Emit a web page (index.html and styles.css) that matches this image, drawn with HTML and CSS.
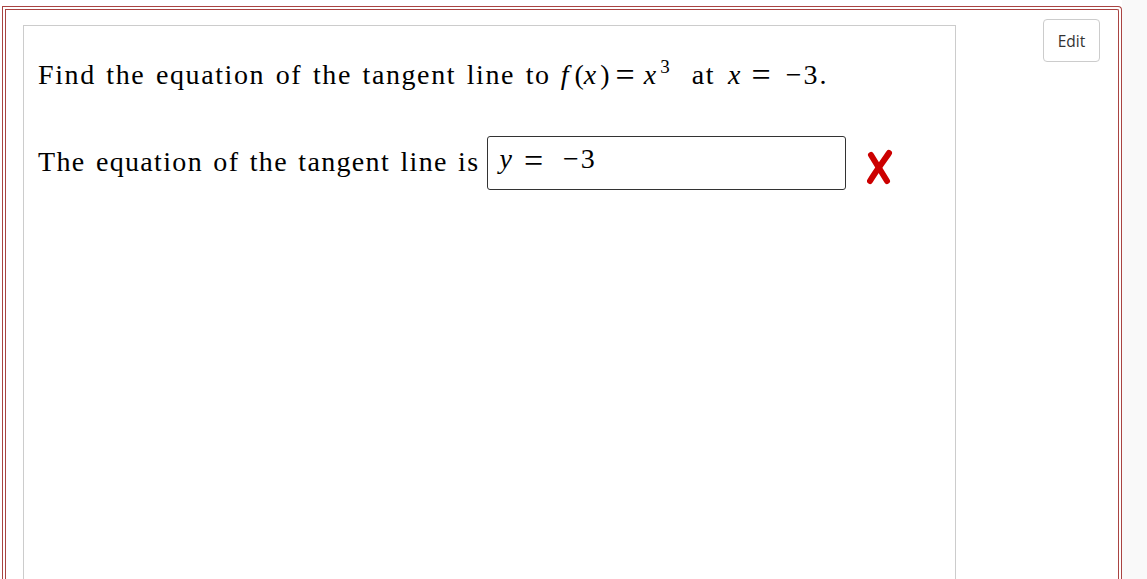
FILE: index.html
```html
<!DOCTYPE html>
<html>
<head>
<meta charset="utf-8">
<link rel="stylesheet" href="styles.css">
</head>
<body>
<div class="page">
  <div class="main">
    <div class="frame-outer">
      <div class="frame-inner">
        <div class="panel">
          <p class="line line1"><span class="t">Find the equation of the tangent line to</span> <span class="mi f">f</span><span class="paren">(</span><span class="mi xa">x</span><span class="paren">)</span><span class="rel r1">=</span><span class="mi xb">x</span><sup class="sup">3</sup><span class="t at">at</span><span class="mi xc">x</span><span class="rel r2">=</span><span class="num">−3.</span></p>
          <div class="line line2">
            <span class="t lead">The equation of the tangent line is</span>
            <span class="answer"><span class="mi">y</span><span class="rel rel-in">=</span><span class="num num-in">−3</span></span>
            <svg class="mark" width="26" height="36" viewBox="0 0 26 36">
              <path d="M4 6 L20 32" stroke="#cc0000" stroke-width="6" stroke-linecap="round" fill="none"/>
              <path d="M22 4 C16 13 9 22 3 32" stroke="#cc0000" stroke-width="6" stroke-linecap="round" fill="none"/>
            </svg>
          </div>
        </div>
        <button class="edit">Edit</button>
      </div>
    </div>
  </div>
  <div class="side"></div>
</div>
</body>
</html>
```
FILE: styles.css
```css
html, body {
  margin: 0;
  padding: 0;
  height: 100%;
  overflow: hidden;
  background: #ffffff;
}
.page {
  display: flex;
  height: 579px;
  overflow: hidden;
}
.main {
  width: 1120px;
  padding: 6px 0 0 2px;
  background: #ffffff;
}
.side {
  flex: 1;
  background: #f9f9f9;
}
.frame-outer {
  box-sizing: border-box;
  height: 573px;
  border: 1px solid #a94442;
  border-bottom: none;
  border-top-right-radius: 4px;
  padding: 2px 2px 0 2px;
}
.frame-inner {
  box-sizing: border-box;
  height: 570px;
  border: 1px solid #a94442;
  border-bottom: none;
  border-top-right-radius: 2px;
  display: flex;
  align-items: flex-start;
}
.panel {
  margin: 15px 0 0 17px;
  width: 933px;
  height: 554px;
  border: 1px solid #cccccc;
  border-bottom: none;
  padding: 0 0 0 14px;
  box-sizing: border-box;
  font-family: "Liberation Serif", "Times New Roman", serif;
  font-size: 28px;
  color: #000;
}
.line {
  margin: 0;
}
.t {
  letter-spacing: 1.6px;
  word-spacing: 2px;
}
.num {
  letter-spacing: 2px;
}
.line1 {
  padding-top: 31px;
  line-height: 36px;
  white-space: nowrap;
}
.line2 {
  display: flex;
  align-items: center;
  margin-top: 43px;
  line-height: 36px;
}
.lead {
  padding-bottom: 3px;
  letter-spacing: 1.34px;
}
.mi {
  font-style: italic;
}
.f {
  margin-left: 3px;
  margin-right: 6px;
}
.xa {
  margin-right: 4px;
}
.rel {
  font-size: 34px;
  line-height: 0;
  vertical-align: -2px;
}
.r1 {
  margin: 0 9px 0 6px;
}
.sup {
  font-size: 19px;
  vertical-align: 11px;
  line-height: 0;
  margin-left: 4px;
}
.at {
  margin-left: 22px;
  margin-right: 13px;
}
.r2 {
  margin: 0 15px 0 11px;
}
.answer {
  margin-left: 8px;
  width: 359px;
  height: 54px;
  box-sizing: border-box;
  border: 1px solid #333333;
  border-radius: 3px;
  padding: 0 0 8px 11px;
  display: flex;
  align-items: center;
}
.rel-in {
  margin: 0 20px 0 12px;
  position: relative;
  top: 2px;
}
.mark {
  margin-left: 21px;
  margin-top: 8px;
}
.edit {
  margin: 9px 18px 0 auto;
  width: 57px;
  height: 43px;
  border: 1px solid #cccccc;
  border-radius: 4px;
  background: #ffffff;
  font-family: "Open Sans", "Liberation Sans", sans-serif;
  font-size: 15.5px;
  color: #333333;
  padding: 0;
}
```
